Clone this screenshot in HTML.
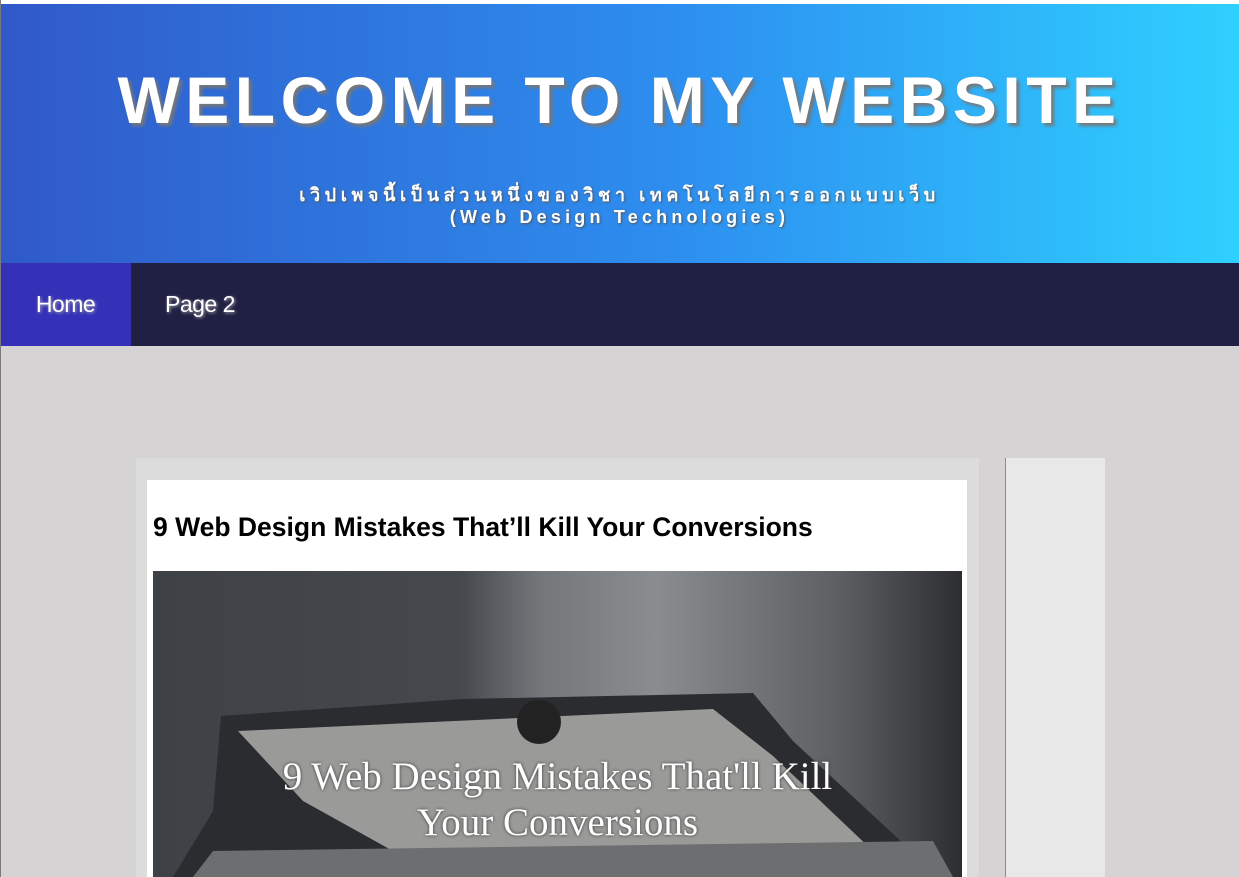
<!DOCTYPE html>
<html><head><meta charset="utf-8"><style>
*{margin:0;padding:0;box-sizing:border-box}
html,body{width:1239px;height:877px;overflow:hidden;background:#d5d3d4;font-family:"Liberation Sans",sans-serif}
.top{position:absolute;left:0;top:0;width:1239px;height:4px;background:#fff}
.lb{position:absolute;left:0;top:0;width:1px;height:877px;background:#7a7a7a;z-index:5}
header{position:absolute;left:0;top:4px;width:1239px;height:259px;background:linear-gradient(90deg,#3059c9,#2d8ff0 55%,#2fd0ff);color:#fff;text-align:center}
h1{position:absolute;left:0;right:0;top:56px;font-size:66px;letter-spacing:5.5px;font-weight:bold;text-shadow:3px 3px 3px #777;line-height:80px}
.sub{position:absolute;left:0;right:0;top:180px;font-size:18px;font-weight:bold;letter-spacing:4.6px;line-height:22px;text-shadow:1px 1px 2px #555;font-family:"Liberation Sans","Noto Sans CJK SC",sans-serif}
.sub span{letter-spacing:4.2px}
nav{position:absolute;left:0;top:263px;width:1239px;height:83px;background:#1f2044}
nav a{position:absolute;top:0;height:83px;line-height:83px;color:#fff;font-size:23px;text-shadow:1px 1px 3px #aaa;text-decoration:none;letter-spacing:-0.5px}
.home{left:0;width:131px;background:#3430b8;text-align:center}
.p2{left:165px}
.box{position:absolute;left:136px;top:458px;width:843px;height:419px;background:#dcdcdc}
.inner{position:absolute;left:147px;top:480px;width:820px;height:397px;background:#fff}
h2{position:absolute;left:153px;top:512px;font-size:26.5px;font-weight:bold;color:#000;letter-spacing:0}
.img{position:absolute;left:153px;top:571px;width:809px;height:306px;overflow:hidden;background:linear-gradient(90deg,#3e4146 0%,#45484d 38%,#74777a 48%,#8a8d8f 62%,#5c5f62 85%,#2c2e31 100%)}
.side{position:absolute;left:1005px;top:458px;width:100px;height:419px;background:#e8e8e8;border-left:1px solid #8a8a8a}
.it{position:absolute;left:0;right:0;text-align:center;color:#fff;font-family:"Liberation Serif",serif;font-size:39px;line-height:46px;top:183px;text-shadow:0 0 3px #333}
</style></head><body>
<div class="top"></div><div class="lb"></div>
<header><h1>WELCOME TO MY WEBSITE</h1>
<div class="sub">เวิปเพจนี้เป็นส่วนหนึ่งของวิชา เทคโนโลยีการออกแบบเว็บ<br><span>(Web Design Technologies)</span></div></header>
<nav><a class="home">Home</a><a class="p2">Page 2</a></nav>
<div class="box"></div><div class="inner"></div>
<h2>9 Web Design Mistakes That’ll Kill Your Conversions</h2>
<div class="side"></div>
<div class="img">
<svg width="809" height="306" style="position:absolute;left:0;top:0">
<polygon points="68,145 310,128 600,122 640,170 780,300 800,306 20,306 60,240" fill="#2a2c2f"/>
<polygon points="85,160 560,138 620,185 720,280 240,280 150,230" fill="#9a9b98"/>
<polygon points="60,280 780,270 800,306 40,306" fill="#6d6e70"/>
<circle cx="386" cy="151" r="22" fill="#222"/>
</svg>
<div class="it">9 Web Design Mistakes That'll Kill<br>Your Conversions</div>
</div>
</body></html>
